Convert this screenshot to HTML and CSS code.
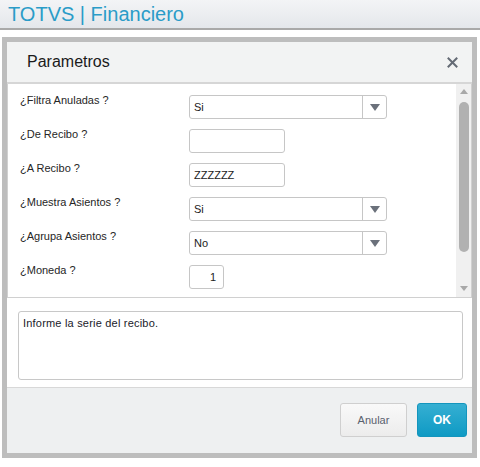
FILE: index.html
```html
<!DOCTYPE html>
<html lang="es">
<head>
    <meta charset="UTF-8">
    <title>TOTVS | Financiero</title>
    <link rel="stylesheet" href="styles.css">
</head>
<body>
    <!-- Barra superior -->
    <header class="app-bar">
        <span class="app-title">TOTVS | Financiero</span>
    </header>

    <!-- Ventana de parámetros -->
    <div class="dialog">
        <div class="dialog-head">
            <h1>Parametros</h1>
            <span class="dialog-close">
                <svg width="11" height="11" viewBox="0 0 11 11">
                    <path d="M1.5 1.5 L9.5 9.5 M9.5 1.5 L1.5 9.5" stroke="#646a74" stroke-width="2" stroke-linecap="square"/>
                </svg>
            </span>
        </div>

        <div class="params">
            <div class="params-list">
                <div class="param-row">
                    <label>¿Filtra Anuladas ?</label>
                    <div class="field select">
                        <span class="value">Si</span>
                        <span class="arrow"></span>
                    </div>
                </div>
                <div class="param-row">
                    <label>¿De Recibo ?</label>
                    <div class="field text"></div>
                </div>
                <div class="param-row">
                    <label>¿A Recibo ?</label>
                    <div class="field text"><span class="value">ZZZZZZ</span></div>
                </div>
                <div class="param-row">
                    <label>¿Muestra Asientos ?</label>
                    <div class="field select">
                        <span class="value">Si</span>
                        <span class="arrow"></span>
                    </div>
                </div>
                <div class="param-row">
                    <label>¿Agrupa Asientos ?</label>
                    <div class="field select">
                        <span class="value">No</span>
                        <span class="arrow"></span>
                    </div>
                </div>
                <div class="param-row">
                    <label>¿Moneda ?</label>
                    <div class="field number"><span class="value">1</span></div>
                </div>
            </div>

            <!-- Barra de desplazamiento -->
            <div class="scrollbar">
                <span class="scroll-up"></span>
                <span class="scroll-thumb"></span>
                <span class="scroll-down"></span>
            </div>
        </div>

        <div class="help">
            <div class="help-box">Informe la serie del recibo.</div>
        </div>

        <div class="dialog-foot">
            <button class="btn btn-cancel">Anular</button>
            <button class="btn btn-ok">OK</button>
        </div>
    </div>
</body>
</html>
```

FILE: styles.css
```css
/* Estilos base */
body {
    margin: 0;
    font-family: 'Liberation Sans', Arial, sans-serif;
    font-size: 11px;
    color: #222;
    background: #fff;
}

/* Barra superior */
.app-bar {
    height: 28px;
    background: linear-gradient(#f3f4f6, #e4e7eb);
    border-bottom: 2px solid #a9a9a9;
    padding-left: 8px;
}

.app-title {
    font-size: 20px;
    line-height: 29px;
    color: #2a9cc8;
}

/* Ventana */
.dialog {
    margin: 7px 3px 0 2px;
    border: 5px solid #bdbdbd;
    background: #fff;
}

.dialog-head {
    height: 40px;
    display: flex;
    align-items: center;
    justify-content: space-between;
    padding: 0 14px 0 20px;
    background: #f2f3f3;
    border-bottom: 2px solid #d6d6d6;
}

.dialog-head h1 {
    margin: 0;
    font-size: 16px;
    font-weight: normal;
    color: #1a1a1a;
}

.dialog-close {
    display: flex;
}

/* Lista de parámetros */
.params {
    display: flex;
    height: 213px;
    border-left: 1px solid #d0d0d0;
    border-right: 1px solid #d0d0d0;
    border-bottom: 1px solid #d0d0d0;
    overflow: hidden;
}

.params-list {
    flex: 1;
    padding: 9px 0 0 12px;
}

.param-row {
    display: flex;
    height: 34px;
}

.param-row label {
    width: 169px;
    line-height: 14px;
    color: #262626;
}

.field {
    box-sizing: border-box;
    height: 24px;
    margin-top: 2px;
    border: 1px solid #c6c6c6;
    border-radius: 3px;
    background: #fff;
    display: flex;
    align-items: center;
}

.field .value {
    padding-left: 4px;
}

.field.select {
    width: 198px;
}

.field.select .value {
    flex: 1;
}

.field.select .arrow {
    width: 23px;
    height: 100%;
    border-left: 1px solid #c6c6c6;
    display: flex;
    align-items: center;
    justify-content: center;
}

.field.select .arrow::after {
    content: "";
    border-left: 5px solid transparent;
    border-right: 5px solid transparent;
    border-top: 7px solid #6b717b;
}

.field.text {
    width: 96px;
}

.field.number {
    width: 35px;
    justify-content: flex-end;
    padding-right: 7px;
}

/* Barra de desplazamiento */
.scrollbar {
    width: 15px;
    background: #f0f0f0;
    display: flex;
    flex-direction: column;
    align-items: center;
}

.scroll-up,
.scroll-down {
    width: 0;
    height: 0;
    border-left: 4px solid transparent;
    border-right: 4px solid transparent;
}

.scroll-up {
    margin-top: 5px;
    border-bottom: 5px solid #a8a8a8;
}

.scroll-thumb {
    width: 10px;
    height: 150px;
    margin-top: 8px;
    border-radius: 5px;
    background: #b1b1b1;
}

.scroll-down {
    margin-top: auto;
    margin-bottom: 6px;
    border-top: 5px solid #a8a8a8;
}

/* Texto de ayuda */
.help {
    padding: 13px 9px 7px 11px;
}

.help-box {
    box-sizing: border-box;
    height: 69px;
    padding: 5px 4px;
    border: 1px solid #c8c8c8;
    border-radius: 3px;
    color: #1a1a2a;
    letter-spacing: 0.2px;
}

/* Pie con botones */
.dialog-foot {
    height: 66px;
    display: flex;
    justify-content: flex-end;
    align-items: flex-start;
    gap: 10px;
    padding: 15px 5px 0 0;
    box-sizing: border-box;
    background: #eef0f1;
    border-top: 1px solid #d8d8d8;
}

.btn {
    height: 34px;
    font-family: inherit;
    font-size: 11px;
    border-radius: 3px;
    cursor: pointer;
}

.btn-cancel {
    width: 67px;
    color: #59616e;
    background: linear-gradient(#f9f9f9, #ececec);
    border: 1px solid #cfcfcf;
}

.btn-ok {
    width: 50px;
    color: #fff;
    font-size: 12px;
    font-weight: bold;
    background: linear-gradient(#35afd2, #0f9ac4);
    border: 1px solid #1395bd;
}
```
